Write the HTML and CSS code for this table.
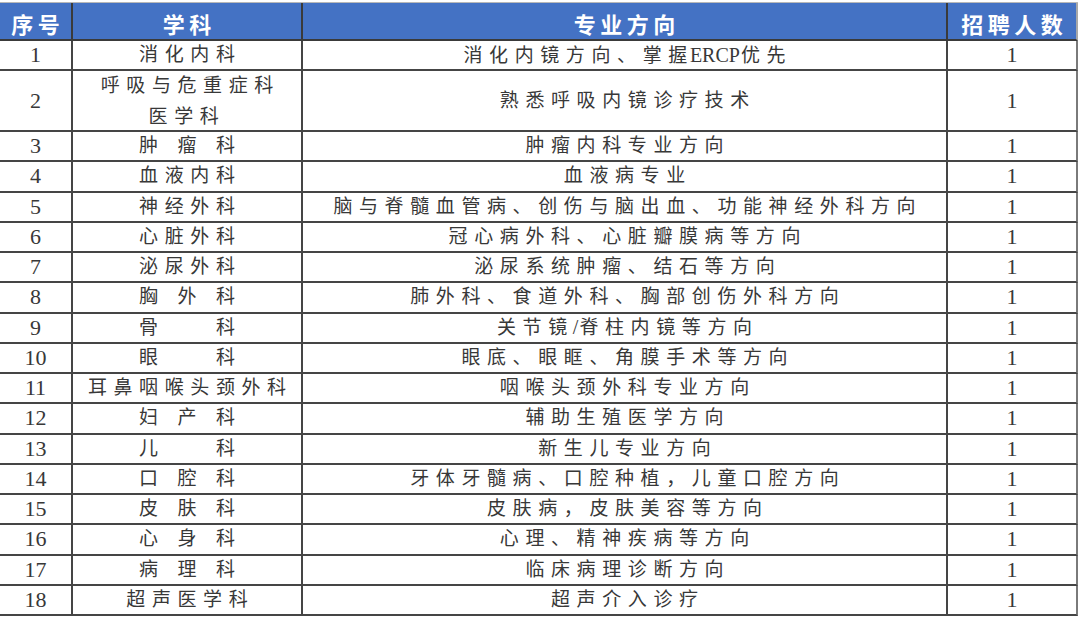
FILE: index.html
```html
<!DOCTYPE html>
<html lang="zh-CN">
<head>
<meta charset="utf-8">
<title>招聘岗位</title>
<link rel="stylesheet" href="styles.css">
</head>
<body>
<div class="sheet">
  <div class="hd">序号</div><div class="hd">学科</div><div class="hd">专业方向</div><div class="hd last">招聘人数</div>

  <div class="c num">1</div><div class="c">消化内科</div><div class="c"><span>消化内镜方向、掌握<span class="lat">ERCP</span>优先</span></div><div class="c num last">1</div>
  <div class="c num tall">2</div><div class="c tall two"><span>呼吸与危重症科<br>医学科</span></div><div class="c tall">熟悉呼吸内镜诊疗技术</div><div class="c num tall last">1</div>
  <div class="c num">3</div><div class="c"><span class="spread">肿瘤科</span></div><div class="c">肿瘤内科专业方向</div><div class="c num last">1</div>
  <div class="c num">4</div><div class="c">血液内科</div><div class="c">血液病专业</div><div class="c num last">1</div>
  <div class="c num">5</div><div class="c">神经外科</div><div class="c">脑与脊髓血管病、创伤与脑出血、功能神经外科方向</div><div class="c num last">1</div>
  <div class="c num">6</div><div class="c">心脏外科</div><div class="c">冠心病外科、心脏瓣膜病等方向</div><div class="c num last">1</div>
  <div class="c num">7</div><div class="c">泌尿外科</div><div class="c">泌尿系统肿瘤、结石等方向</div><div class="c num last">1</div>
  <div class="c num">8</div><div class="c"><span class="spread">胸外科</span></div><div class="c">肺外科、食道外科、胸部创伤外科方向</div><div class="c num last">1</div>
  <div class="c num">9</div><div class="c"><span class="spread">骨科</span></div><div class="c"><span>关节镜<span class="lat slash">/</span>脊柱内镜等方向</span></div><div class="c num last">1</div>
  <div class="c num">10</div><div class="c"><span class="spread">眼科</span></div><div class="c">眼底、眼眶、角膜手术等方向</div><div class="c num last">1</div>
  <div class="c num">11</div><div class="c">耳鼻咽喉头颈外科</div><div class="c">咽喉头颈外科专业方向</div><div class="c num last">1</div>
  <div class="c num">12</div><div class="c"><span class="spread">妇产科</span></div><div class="c">辅助生殖医学方向</div><div class="c num last">1</div>
  <div class="c num">13</div><div class="c"><span class="spread">儿科</span></div><div class="c">新生儿专业方向</div><div class="c num last">1</div>
  <div class="c num">14</div><div class="c"><span class="spread">口腔科</span></div><div class="c">牙体牙髓病、口腔种植，儿童口腔方向</div><div class="c num last">1</div>
  <div class="c num">15</div><div class="c"><span class="spread">皮肤科</span></div><div class="c">皮肤病，皮肤美容等方向</div><div class="c num last">1</div>
  <div class="c num">16</div><div class="c"><span class="spread">心身科</span></div><div class="c">心理、精神疾病等方向</div><div class="c num last">1</div>
  <div class="c num">17</div><div class="c"><span class="spread">病理科</span></div><div class="c">临床病理诊断方向</div><div class="c num last">1</div>
  <div class="c num">18</div><div class="c">超声医学科</div><div class="c">超声介入诊疗</div><div class="c num last">1</div>
</div>
</body>
</html>
```

FILE: styles.css
```css
html, body {
  margin: 0;
  padding: 0;
  background: #ffffff;
}

.sheet {
  margin-top: 2px;
  width: 1078px;
  display: grid;
  grid-template-columns: 73px 230px 645px 130px;
  grid-template-rows: 38px 30px 61px repeat(16, 30.25px);
  border-top: 1px solid #b8b8b8;
  font-family: "Liberation Serif", "Noto Sans CJK SC", serif;
  color: #383838;
}

.hd {
  box-sizing: border-box;
  background: #4472c4;
  color: #ffffff;
  font-family: "Noto Sans CJK SC", sans-serif;
  font-weight: 700;
  font-size: 22px;
  letter-spacing: 4.5px;
  text-indent: 4.5px;
  display: flex;
  align-items: center;
  justify-content: center;
  padding-top: 3px;
  border-right: 2px solid #3a3a3a;
  border-bottom: 2px solid #3a3a3a;
  line-height: 1;
}

.hd.last {
  border-right: 2px solid #a8a8a8;
}

.c {
  box-sizing: border-box;
  display: flex;
  align-items: center;
  justify-content: center;
  text-align: center;
  border-right: 2px solid #454545;
  border-bottom: 2px solid #454545;
  font-size: 19px;
  letter-spacing: 6.6px;
  text-indent: 6.6px;
  line-height: 30px;
  white-space: nowrap;
}

.c.last {
  border-right: 2px solid #7a7a7a;
}

.c.two {
  line-height: 31px;
}

.num {
  font-size: 22px;
  letter-spacing: 0;
  text-indent: 0;
}

.lat {
  letter-spacing: 0;
  font-size: 20px;
  margin-left: -4px;
  margin-right: 1px;
}

.lat.slash {
  margin-left: -1px;
  margin-right: 1px;
}

.spread {
  display: inline-block;
  width: 96px;
  letter-spacing: 0;
  text-indent: 0;
  text-align: justify;
  text-align-last: justify;
  text-justify: inter-character;
}
```
